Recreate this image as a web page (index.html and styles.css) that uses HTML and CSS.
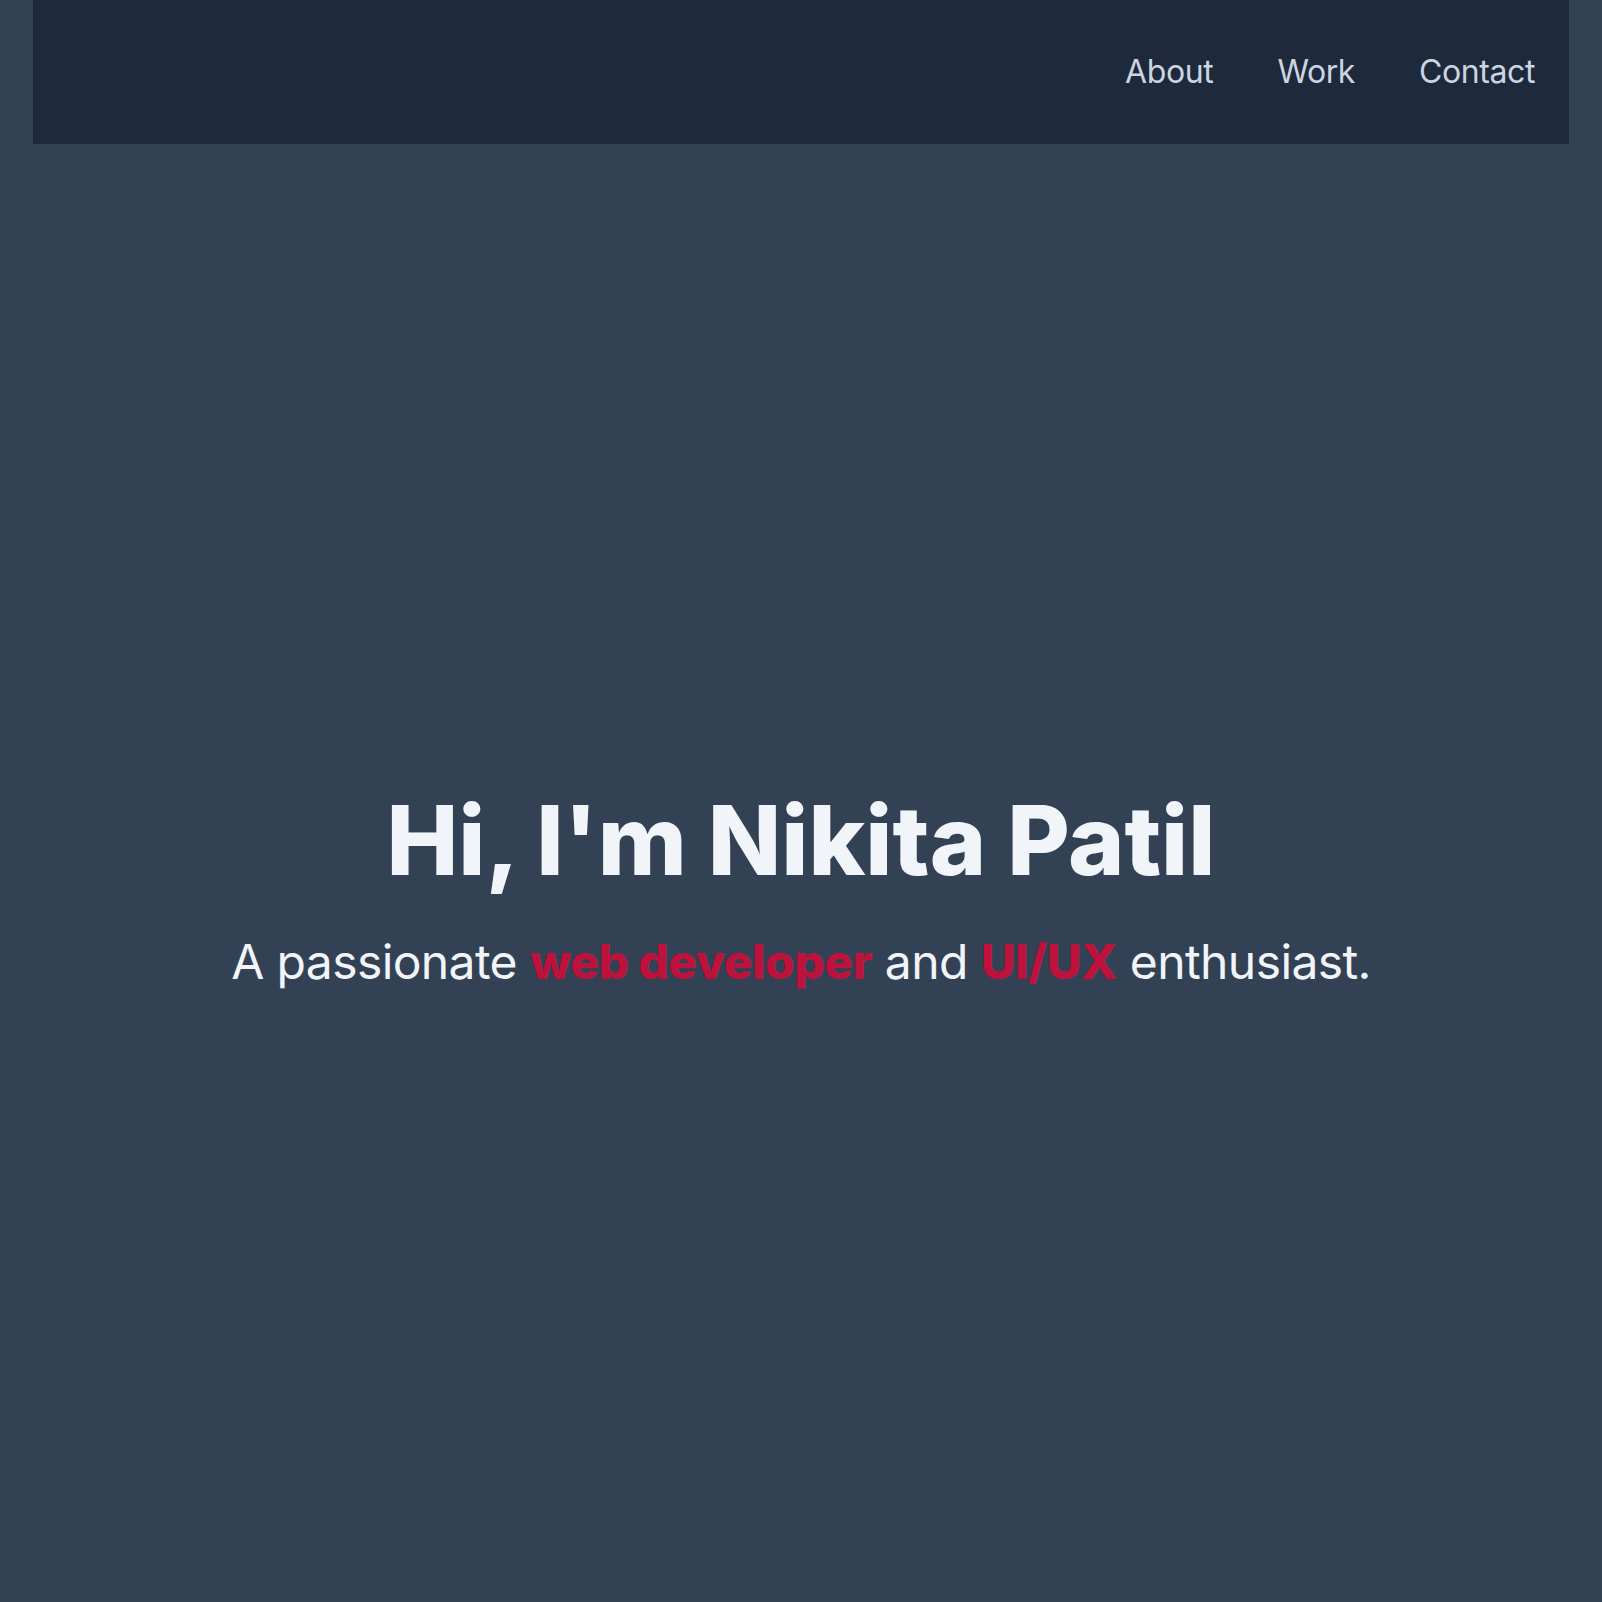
FILE: index.html
```html
<!DOCTYPE html>
<html lang="en">
<head>
<meta charset="utf-8">
<title>Nikita Patil</title>
<link rel="stylesheet" href="styles.css">
</head>
<body>
<header class="site-header">
  <nav class="nav">
    <a class="nav-link" href="#about">About</a>
    <a class="nav-link" href="#work">Work</a>
    <a class="nav-link" href="#contact">Contact</a>
  </nav>
</header>
<main class="hero">
  <h1 class="hero-title">Hi, I'm Nikita Patil</h1>
  <p class="hero-sub">A passionate <span class="accent">web developer</span> and <span class="accent">UI/UX</span> enthusiast.</p>
</main>
</body>
</html>
```
FILE: styles.css
```css
html, body {
  margin: 0;
  padding: 0;
}
body {
  background: #334155;
  font-family: Inter, "Noto Sans", sans-serif;
  color: #f1f5f9;
  min-height: 100vh;
}
.site-header {
  max-width: 1536px;
  margin: 0 auto;
  height: 144px;
  background: #1e293b;
  display: flex;
  align-items: center;
  justify-content: flex-end;
  padding-right: 34px;
  box-sizing: border-box;
}
.nav {
  display: flex;
  gap: 64px;
}
.nav-link {
  color: #cbd5e1;
  text-decoration: none;
  font-size: 32px;
  line-height: 1;
  letter-spacing: -0.4px;
}
.hero {
  height: 1458px;
  box-sizing: border-box;
  padding-top: 32px;
  display: flex;
  flex-direction: column;
  align-items: center;
  justify-content: center;
  text-align: center;
}
.hero-title {
  margin: 0;
  font-size: 96px;
  font-weight: 800;
  line-height: 1;
  color: #f1f5f9;
  letter-spacing: 0;
}
.hero-sub {
  margin: 50px 0 0;
  font-size: 48px;
  line-height: 1;
  font-weight: 400;
  color: #f1f5f9;
  letter-spacing: -0.6px;
}
.accent {
  color: #be123c;
  font-weight: 800;
}
```
